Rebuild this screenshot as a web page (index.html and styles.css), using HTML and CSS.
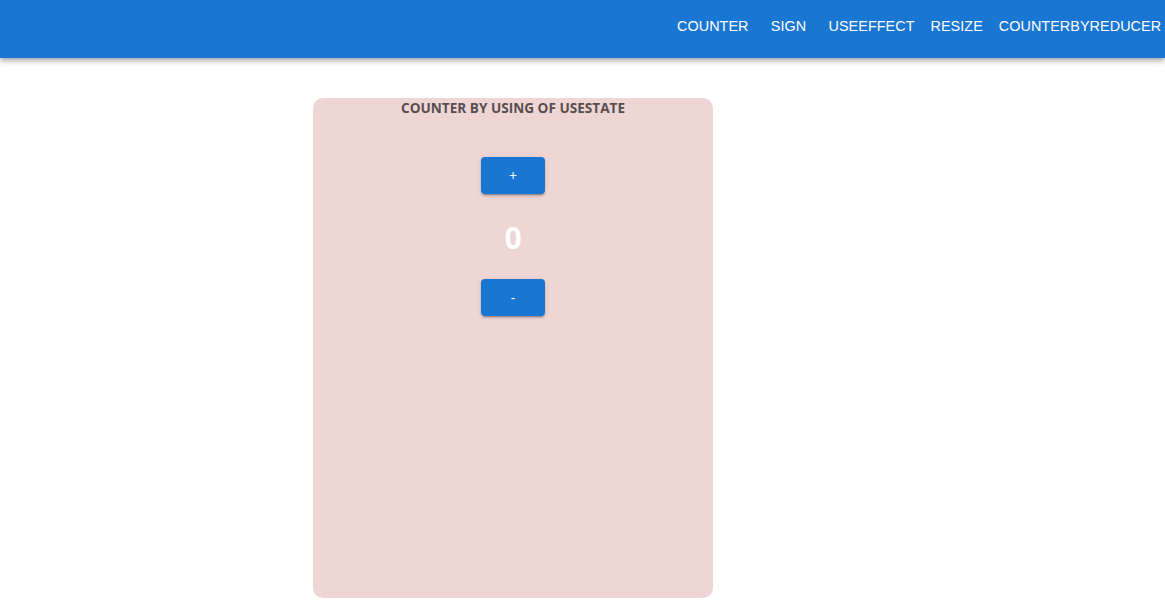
FILE: index.html
```html
<!DOCTYPE html>
<html>
<head>
<meta charset="utf-8">
<link rel="stylesheet" href="styles.css">
</head>
<body>
<header class="appbar">
  <nav class="nav">
    <a class="nav-btn">Counter</a>
    <a class="nav-btn">Sign</a>
    <a class="nav-btn">UseEffect</a>
    <a class="nav-btn">Resize</a>
    <a class="nav-btn">CounterByReducer</a>
  </nav>
</header>
<main class="main">
  <section class="card">
    <h2 class="card-title">COUNTER BY USING OF USESTATE</h2>
    <button class="btn">+</button>
    <div class="count">0</div>
    <button class="btn">-</button>
  </section>
</main>
</body>
</html>
```
FILE: styles.css
```css
html, body {
  margin: 0;
  padding: 0;
  background: #ffffff;
  overflow: hidden;
}
body {
  width: 1165px;
  height: 608px;
  font-family: "Open Sans", "Noto Sans", sans-serif;
}
.appbar {
  height: 58px;
  background: #1976d2;
  box-shadow: 0 2px 4px -1px rgba(0,0,0,0.2), 0 4px 5px 0 rgba(0,0,0,0.14), 0 1px 10px 0 rgba(0,0,0,0.12);
  display: flex;
  align-items: flex-start;
  overflow: hidden;
  position: relative;
  z-index: 1;
}
.nav {
  display: flex;
  padding-left: 669px;
  padding-top: 8px;
  white-space: nowrap;
}
.nav-btn {
  font-family: "Liberation Sans", Arial, sans-serif;
  font-size: 14.4px;
  letter-spacing: 0.05px;
  text-transform: uppercase;
  color: #ffffff;
  height: 36px;
  line-height: 36px;
  padding: 0 8px;
  min-width: 64px;
  box-sizing: border-box;
  text-align: center;
  flex: none;
}
.nav-btn:last-child {
  padding-right: 0;
}
.main {
  padding: 40px 0 0 313px;
}
.card {
  width: 400px;
  height: 500px;
  background: #f0d5d5;
  border-radius: 10px;
  display: flex;
  flex-direction: column;
  align-items: center;
}
.card-title {
  margin: 0;
  padding-top: 1px;
  font-size: 13.6px;
  font-weight: 700;
  color: #574f4f;
  line-height: 18px;
}
.btn {
  margin-top: 40px;
  width: 64px;
  height: 37px;
  border: none;
  border-radius: 4px;
  background: #1976d2;
  color: #ffffff;
  font-family: "Open Sans", sans-serif;
  font-size: 14px;
  box-shadow: 0 3px 1px -2px rgba(0,0,0,0.2), 0 2px 2px 0 rgba(0,0,0,0.14), 0 1px 5px 0 rgba(0,0,0,0.12);
  padding: 0;
}
.count + .btn {
  margin-top: 17px;
}
.count {
  margin-top: 20px;
  font-size: 30px;
  font-weight: 700;
  color: #ffffff;
  line-height: 48px;
}
```
